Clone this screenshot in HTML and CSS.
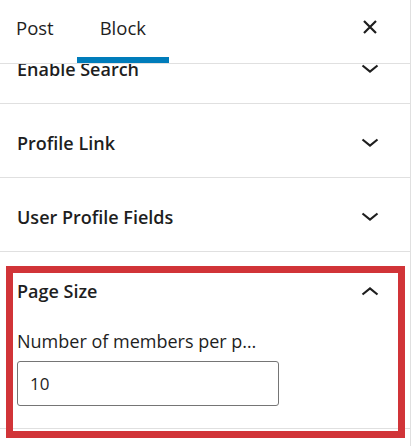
FILE: index.html
```html
<!DOCTYPE html>
<html>
<head>
<meta charset="utf-8">
<link rel="stylesheet" href="styles.css">
</head>
<body>
<div class="sidebar">
  <div class="header">
    <div class="tab tab-first">Post</div>
    <div class="tab tab-active">Block</div>
    <div class="spacer"></div>
    <button class="close" aria-label="Close">
      <svg width="16" height="16" viewBox="0 0 16 16"><path d="M2 2L14 14M14 2L2 14" stroke="#1e1e1e" stroke-width="2.2" fill="none"/></svg>
    </button>
  </div>
  <div class="scroll">
    <div class="list">
      <div class="panel">
        <div class="panel-title"><span>Enable Search</span>
          <svg class="chev" width="18" height="10" viewBox="0 0 18 10"><path d="M1.5 1.5L9 7.5L16.5 1.5" stroke="#1e1e1e" stroke-width="2.2" fill="none"/></svg>
        </div>
      </div>
      <div class="panel">
        <div class="panel-title"><span>Profile Link</span>
          <svg class="chev" width="18" height="10" viewBox="0 0 18 10"><path d="M1.5 1.5L9 7.5L16.5 1.5" stroke="#1e1e1e" stroke-width="2.2" fill="none"/></svg>
        </div>
      </div>
      <div class="panel">
        <div class="panel-title"><span>User Profile Fields</span>
          <svg class="chev" width="18" height="10" viewBox="0 0 18 10"><path d="M1.5 1.5L9 7.5L16.5 1.5" stroke="#1e1e1e" stroke-width="2.2" fill="none"/></svg>
        </div>
      </div>
      <div class="panel panel-open">
        <div class="panel-title"><span>Page Size</span>
          <svg class="chev" width="18" height="10" viewBox="0 0 18 10"><path d="M1.5 8.5L9 2.5L16.5 8.5" stroke="#1e1e1e" stroke-width="2.2" fill="none"/></svg>
        </div>
        <div class="panel-body">
          <label class="field-label">Number of members per page</label>
          <div class="input">10</div>
        </div>
      </div>
    </div>
  </div>
  <div class="highlight"></div>
</div>
</body>
</html>
```
FILE: styles.css
```css
html, body {
  margin: 0;
  padding: 0;
  background: #fff;
}
body {
  font-family: "Open Sans", "Noto Sans", sans-serif;
  color: #1e1e1e;
  width: 414px;
  height: 446px;
  overflow: hidden;
}
.sidebar {
  position: relative;
  width: 410px;
  height: 446px;
  border-right: 1px solid #e0e0e0;
  display: flex;
  flex-direction: column;
}
.header {
  height: 63px;
  border-bottom: 1px solid #e0e0e0;
  display: flex;
  align-items: stretch;
  flex: none;
}
.tab {
  font-size: 18.5px;
  padding: 0 23px;
  display: flex;
  align-items: center;
  padding-bottom: 9px;
  box-sizing: border-box;
}
.tab-first {
  padding-left: 16px;
}
.tab-active {
  box-shadow: inset 0 -6px 0 #007cba;
}
.spacer { flex: 1; }
.close {
  border: 0;
  background: none;
  padding: 0;
  width: 64px;
  display: flex;
  align-items: center;
  justify-content: flex-start;
  padding-left: 16px;
  padding-bottom: 9px;
}
.scroll {
  flex: 1;
  overflow: hidden;
}
.list {
  margin-top: -34px;
}
.panel {
  border-bottom: 1px solid #e0e0e0;
}
.panel-title {
  height: 73px;
  display: flex;
  align-items: center;
  justify-content: space-between;
  padding: 5px 31px 0 17px;
  box-sizing: border-box;
  font-size: 18px;
  font-weight: 600;
}
.chev { display: block; margin-top: 0; }
.panel-body {
  padding: 4px 17px 22px 17px;
}
.field-label {
  display: block;
  width: 245px;
  font-size: 18px;
  white-space: nowrap;
  overflow: hidden;
  text-overflow: ellipsis;
  line-height: 24px;
  margin-bottom: 8px;
}
.input {
  width: 262px;
  height: 45px;
  box-sizing: border-box;
  border: 1px solid #757575;
  border-radius: 3px;
  padding: 0 12px;
  display: flex;
  align-items: center;
  font-size: 17px;
}
.highlight {
  position: absolute;
  left: 6px;
  top: 266px;
  width: 399px;
  height: 172px;
  box-sizing: border-box;
  border: 7px solid #d13438;
}
```
